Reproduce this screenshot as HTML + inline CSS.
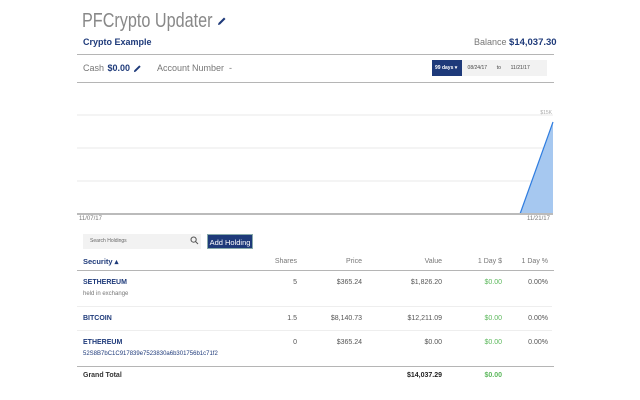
<!DOCTYPE html>
<html><head><style>
*{margin:0;padding:0;box-sizing:border-box}
body{width:640px;height:400px;background:#fff;font-family:"Liberation Sans",sans-serif;position:relative;overflow:hidden;color:#555}
.a{position:absolute;white-space:nowrap}
.hr{position:absolute;left:77px;width:477px;height:1px;background:#b5b5b5}
.lt{position:absolute;left:77px;width:475px;height:1px;background:#eee}
.b{color:#1e3a7a;font-weight:bold}
.g{color:#5cb85c}
.r{text-align:right}
.sm{font-size:7px}
</style></head><body>
<div class="a" style="left:82px;top:10px;font-size:20px;color:#888;transform:scaleX(0.81);transform-origin:0 0">PFCrypto Updater</div>
<svg class="a" style="left:217px;top:16px" width="10" height="10" viewBox="0 0 10 10"><path d="M1 9 L1.5 7 L7 1.5 L8.5 3 L3 8.5 Z" fill="#1e3a7a"/></svg>
<div class="a b" style="left:83px;top:37px;font-size:9px">Crypto Example</div>
<div class="a" style="left:474px;top:37px;font-size:9px;color:#777">Balance <span class="b" style="font-size:9.5px">$14,037.30</span></div>
<div class="hr" style="top:54px"></div>
<div class="a" style="left:83px;top:63px;font-size:9px;color:#777">Cash <span class="b" style="margin-left:1px">$0.00</span></div>
<svg class="a" style="left:133px;top:64px" width="9" height="9" viewBox="0 0 10 10"><path d="M1 9 L1.5 7 L7 1.5 L8.5 3 L3 8.5 Z" fill="#1e3a7a"/></svg>
<div class="a" style="left:157px;top:63px;font-size:9px;color:#777">Account Number &nbsp;-</div>
<div class="a" style="left:432px;top:60px;width:30px;height:16px;background:#1e3a7a;color:#fff;font-size:5px;font-weight:bold;line-height:16px;padding-left:3px">99 days ▾</div>
<div class="a" style="left:462px;top:60px;width:85px;height:16px;background:#f2f2f2;font-size:5px;line-height:16px;color:#444">&nbsp;&nbsp;&nbsp;&nbsp;08/24/17 &nbsp;&nbsp;&nbsp;&nbsp;&nbsp;&nbsp;to &nbsp;&nbsp;&nbsp;&nbsp;&nbsp;&nbsp;11/21/17</div>
<div class="hr" style="top:82px"></div>
<svg class="a" style="left:0;top:100px" width="640" height="130">
<line x1="77" y1="15" x2="553" y2="15" stroke="#e8e8e8"/>
<line x1="77" y1="48" x2="553" y2="48" stroke="#e8e8e8"/>
<line x1="77" y1="81" x2="553" y2="81" stroke="#e8e8e8"/>
<polygon points="520,114 553,22 553,114" fill="#a6c8f0"/>
<line x1="520" y1="114" x2="553" y2="22" stroke="#2f7de0" stroke-width="1.2"/>
<line x1="77" y1="114" x2="553" y2="114" stroke="#bbb" stroke-width="2"/>
<text x="552" y="14" font-size="5" fill="#aaa" text-anchor="end" font-family="Liberation Sans">$15K</text>
</svg>
<div class="a" style="left:79px;top:216px;font-size:6px;color:#777">11/07/17</div>
<div class="a" style="left:527px;top:216px;font-size:6px;color:#777">11/21/17</div>
<div class="a" style="left:83px;top:234px;width:118px;height:15px;background:#f2f2f2;font-size:5px;line-height:15px;padding-left:7px;color:#666">Search Holdings</div>
<svg class="a" style="left:190px;top:236px" width="9" height="9" viewBox="0 0 9 9"><circle cx="3.6" cy="3.6" r="2.6" fill="none" stroke="#555"/><line x1="5.5" y1="5.5" x2="8" y2="8" stroke="#555"/></svg>
<div class="a" style="left:207px;top:234px;width:46px;height:15px;background:#1e3a7a;color:#fff;font-size:7.5px;line-height:15px;text-align:center;border:1px solid #8aa">Add Holding</div>
<div class="a b" style="left:83px;top:257px;font-size:7.5px">Security ▴</div>
<div class="a sm r" style="left:250px;top:258px;width:47px;color:#777">Shares</div>
<div class="a sm r" style="left:300px;top:258px;width:62px;color:#777">Price</div>
<div class="a sm r" style="left:360px;top:258px;width:82px;color:#777">Value</div>
<div class="a sm r" style="left:450px;top:258px;width:52px;color:#777">1 Day $</div>
<div class="a sm r" style="left:500px;top:258px;width:48px;color:#777">1 Day %</div>
<div class="hr" style="top:270px"></div>

<div class="a b sm" style="left:83px;top:279px">SETHEREUM</div>
<div class="a" style="left:83px;top:291px;font-size:6px;color:#777">held in exchange</div>
<div class="lt" style="top:306px"></div>
<div class="a b sm" style="left:83px;top:315px">BITCOIN</div>
<div class="lt" style="top:330px"></div>
<div class="a b sm" style="left:83px;top:339px">ETHEREUM</div>
<div class="a" style="left:83px;top:351px;font-size:6px;color:#1e3a7a">52S8B7bC1C917839e7523830a6b301756b1c71f2</div>

<div class="a sm r" style="left:250px;top:279px;width:47px">5</div>
<div class="a sm r" style="left:300px;top:279px;width:62px">$365.24</div>
<div class="a sm r" style="left:360px;top:279px;width:82px">$1,826.20</div>
<div class="a sm r g" style="left:450px;top:279px;width:52px">$0.00</div>
<div class="a sm r" style="left:500px;top:279px;width:48px">0.00%</div>

<div class="a sm r" style="left:250px;top:315px;width:47px">1.5</div>
<div class="a sm r" style="left:300px;top:315px;width:62px">$8,140.73</div>
<div class="a sm r" style="left:360px;top:315px;width:82px">$12,211.09</div>
<div class="a sm r g" style="left:450px;top:315px;width:52px">$0.00</div>
<div class="a sm r" style="left:500px;top:315px;width:48px">0.00%</div>

<div class="a sm r" style="left:250px;top:339px;width:47px">0</div>
<div class="a sm r" style="left:300px;top:339px;width:62px">$365.24</div>
<div class="a sm r" style="left:360px;top:339px;width:82px">$0.00</div>
<div class="a sm r g" style="left:450px;top:339px;width:52px">$0.00</div>
<div class="a sm r" style="left:500px;top:339px;width:48px">0.00%</div>

<div class="hr" style="top:366px"></div>
<div class="a sm" style="left:83px;top:372px;font-weight:bold;color:#333">Grand Total</div>
<div class="a sm r" style="left:360px;top:372px;width:82px;font-weight:bold;color:#222">$14,037.29</div>
<div class="a sm r g" style="left:450px;top:372px;width:52px;font-weight:bold">$0.00</div>
</body></html>
